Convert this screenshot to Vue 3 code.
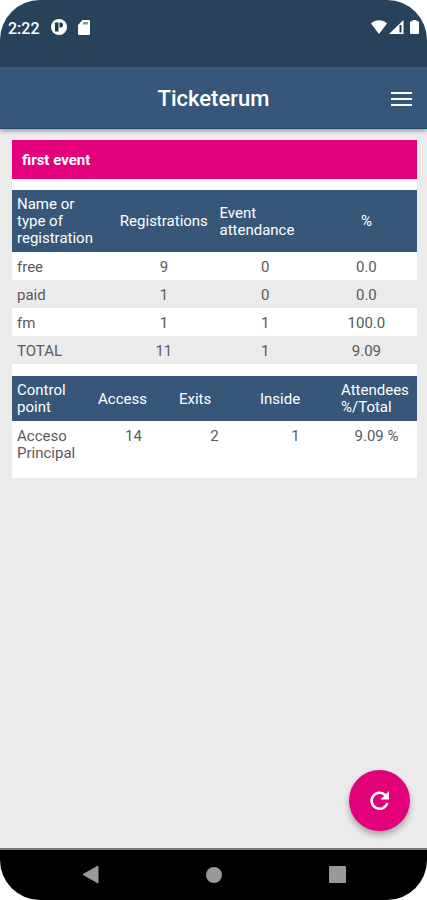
<script setup>
const registrationHeads = ['Name or type of registration', 'Registrations', 'Event attendance', '%']
const registrations = [
  ['free', '9', '0', '0.0'],
  ['paid', '1', '0', '0.0'],
  ['fm', '1', '1', '100.0'],
  ['TOTAL', '11', '1', '9.09'],
]
const controlHeads = ['Control point', 'Access', 'Exits', 'Inside', 'Attendees %/Total']
const controls = [['Acceso Principal', '14', '2', '1', '9.09 %']]
</script>

<template>
  <div class="device">
    <div class="status">
      <div class="status-group left">
        <span class="clock">2:22</span>
        <svg class="glyph" width="16" height="16" viewBox="0 0 16 16" aria-hidden="true">
          <circle cx="8" cy="8" r="8" fill="#fff" />
          <path d="M4 3.500h3.500v9H4zM8.500 3.500h1a2.500 2.500 0 0 1 0 5h-1z" fill="#20374d" />
        </svg>
        <svg class="glyph" width="12" height="15" viewBox="0 0 12 15" aria-hidden="true">
          <path d="M4.500 0H11a1 1 0 0 1 1 1v13a1 1 0 0 1-1 1H1a1 1 0 0 1-1-1V5z" fill="#fff" />
          <path d="M5 2h5v2.500H5z" fill="#8f989f" />
        </svg>
      </div>
      <div class="status-group right">
        <svg class="glyph" width="16" height="14" viewBox="0 0 16 14" aria-hidden="true">
          <path d="M0 3.500C4.500-.8 11.500-.8 16 3.500L8 14z" fill="#fff" />
        </svg>
        <svg class="glyph" width="15" height="14" viewBox="0 0 15 14" aria-hidden="true">
          <path d="M14.500 0v14H0z" fill="#fff" />
          <path d="M11.500 5v7.500" stroke="#20374d" stroke-width="2" />
        </svg>
        <svg class="glyph battery" width="9" height="14" viewBox="0 0 9 14" aria-hidden="true">
          <path d="M2.500 1.200V0h4v1.200H8a1 1 0 0 1 1 1V13a1 1 0 0 1-1 1H1a1 1 0 0 1-1-1V2.200a1 1 0 0 1 1-1z" fill="#fff" />
        </svg>
      </div>
    </div>

    <header class="bar">
      <h1 class="title">Ticketerum</h1>
      <button class="menu" type="button" aria-label="Menu">
        <svg width="21" height="14" viewBox="0 0 21 14" aria-hidden="true">
          <path d="M0 1h21M0 7h21M0 13h21" stroke="#fff" stroke-width="2" />
        </svg>
      </button>
    </header>

    <main class="content">
      <section class="card">
        <h2 class="event">first event</h2>
        <table class="striped">
          <thead>
            <tr>
              <th v-for="(head, i) in registrationHeads" :key="head" scope="col" :class="{ centered: i % 2 === 1 }">{{ head }}</th>
            </tr>
          </thead>
          <tbody>
            <tr v-for="row in registrations" :key="row[0]">
              <td v-for="(cell, i) in row" :key="i">{{ cell }}</td>
            </tr>
          </tbody>
        </table>
        <table>
          <thead>
            <tr>
              <th v-for="head in controlHeads" :key="head" scope="col">{{ head }}</th>
            </tr>
          </thead>
          <tbody>
            <tr v-for="row in controls" :key="row[0]">
              <td v-for="(cell, i) in row" :key="i">{{ cell }}</td>
            </tr>
          </tbody>
        </table>
      </section>
      <button class="refresh" type="button" aria-label="Refresh">
        <svg width="19" height="19" viewBox="0 0 19 19" aria-hidden="true">
          <path d="M15.500 4.300A8 8 0 1 0 17.300 12" fill="none" stroke="#fff" stroke-width="2.600" />
          <path d="M19 0v8.500h-8.500z" fill="#fff" />
        </svg>
      </button>
    </main>

    <nav class="system">
      <button type="button" aria-label="Back">
        <svg width="18" height="20" viewBox="0 0 18 20" aria-hidden="true"><path d="M16 1v17L1 9.500z" fill="#999" stroke="#999" stroke-linejoin="round" /></svg>
      </button>
      <button type="button" aria-label="Home">
        <svg width="18" height="18" viewBox="0 0 18 18" aria-hidden="true"><circle cx="9" cy="9" r="8" fill="#999" /></svg>
      </button>
      <button type="button" aria-label="Recent apps">
        <svg width="18" height="18" viewBox="0 0 18 18" aria-hidden="true"><rect x="1" y="0" width="17" height="17" rx="1" fill="#999" /></svg>
      </button>
    </nav>
  </div>
</template>

<style>
body {
  background: #fff;
}
</style>

<style scoped>
.device {
  display: flex;
  flex-direction: column;
  min-height: 100vh;
  border-radius: 40px;
  overflow: hidden;
  background: #ebebeb;
  font-family: Roboto, "Liberation Sans", sans-serif;
  font-size: 15px;
  line-height: 17px;
  color: #5a5a5a;
}
button {
  display: flex;
  align-items: center;
  justify-content: center;
  border: 0;
  padding: 0;
  background: none;
  cursor: pointer;
}
.status {
  display: flex;
  justify-content: space-between;
  height: 67px;
  padding: 0 8px;
  box-sizing: border-box;
  background: #29425b;
}
.status-group {
  display: flex;
  align-items: center;
  height: 54px;
}
.left {
  gap: 11px;
}
.right {
  gap: 2px;
}
.battery {
  margin-left: 4px;
}
.clock {
  padding-top: 2px;
  font-size: 16px;
  font-weight: 500;
  color: #fff;
}
.bar {
  display: grid;
  grid-template-columns: 1fr auto 1fr;
  align-items: center;
  height: 62px;
  padding: 3px 15px 0;
  box-sizing: border-box;
  background: #365779;
  border-bottom: 1px solid #234a6b;
  box-shadow: 0 2px 4px rgba(0, 0, 0, 0.35);
  z-index: 1;
}
.title {
  grid-column: 2;
  margin: 0;
  font-size: 22px;
  line-height: 28px;
  font-weight: 500;
  color: #fff;
}
.menu {
  justify-self: end;
}
.content {
  position: relative;
  flex: 1;
  padding: 11px 10px 12px 12px;
}
.card {
  padding-bottom: 12px;
  background: #fff;
}
.event {
  margin: 0;
  padding: 12px 10px 10px;
  font-size: 15px;
  line-height: 17px;
  font-weight: 700;
  color: #fff;
  background: #e3007b;
}
table {
  width: 100%;
  margin-top: 11px;
  table-layout: fixed;
  border-collapse: collapse;
}
th {
  padding: 6px 5px 5px;
  font-weight: 400;
  text-align: left;
  vertical-align: middle;
  color: #fff;
  background: #365779;
}
th:first-child {
  padding-right: 16px;
}
.striped + table {
  margin-top: 12px;
}
td {
  padding: 7px 5px 4px;
  text-align: center;
  vertical-align: top;
}
td:first-child {
  text-align: left;
}
.centered {
  text-align: center;
}
.striped tbody tr:nth-child(even) {
  background: #ebebeb;
}
.refresh {
  position: absolute;
  right: 17px;
  bottom: 17px;
  width: 61px;
  height: 61px;
  border-radius: 50%;
  background: #e3007b;
  box-shadow: 0 4px 6px rgba(0, 0, 0, 0.3);
}
.system {
  display: flex;
  justify-content: center;
  gap: 105px;
  height: 52px;
  box-sizing: border-box;
  border-top: 2px solid #777;
  background: #000;
}
</style>
